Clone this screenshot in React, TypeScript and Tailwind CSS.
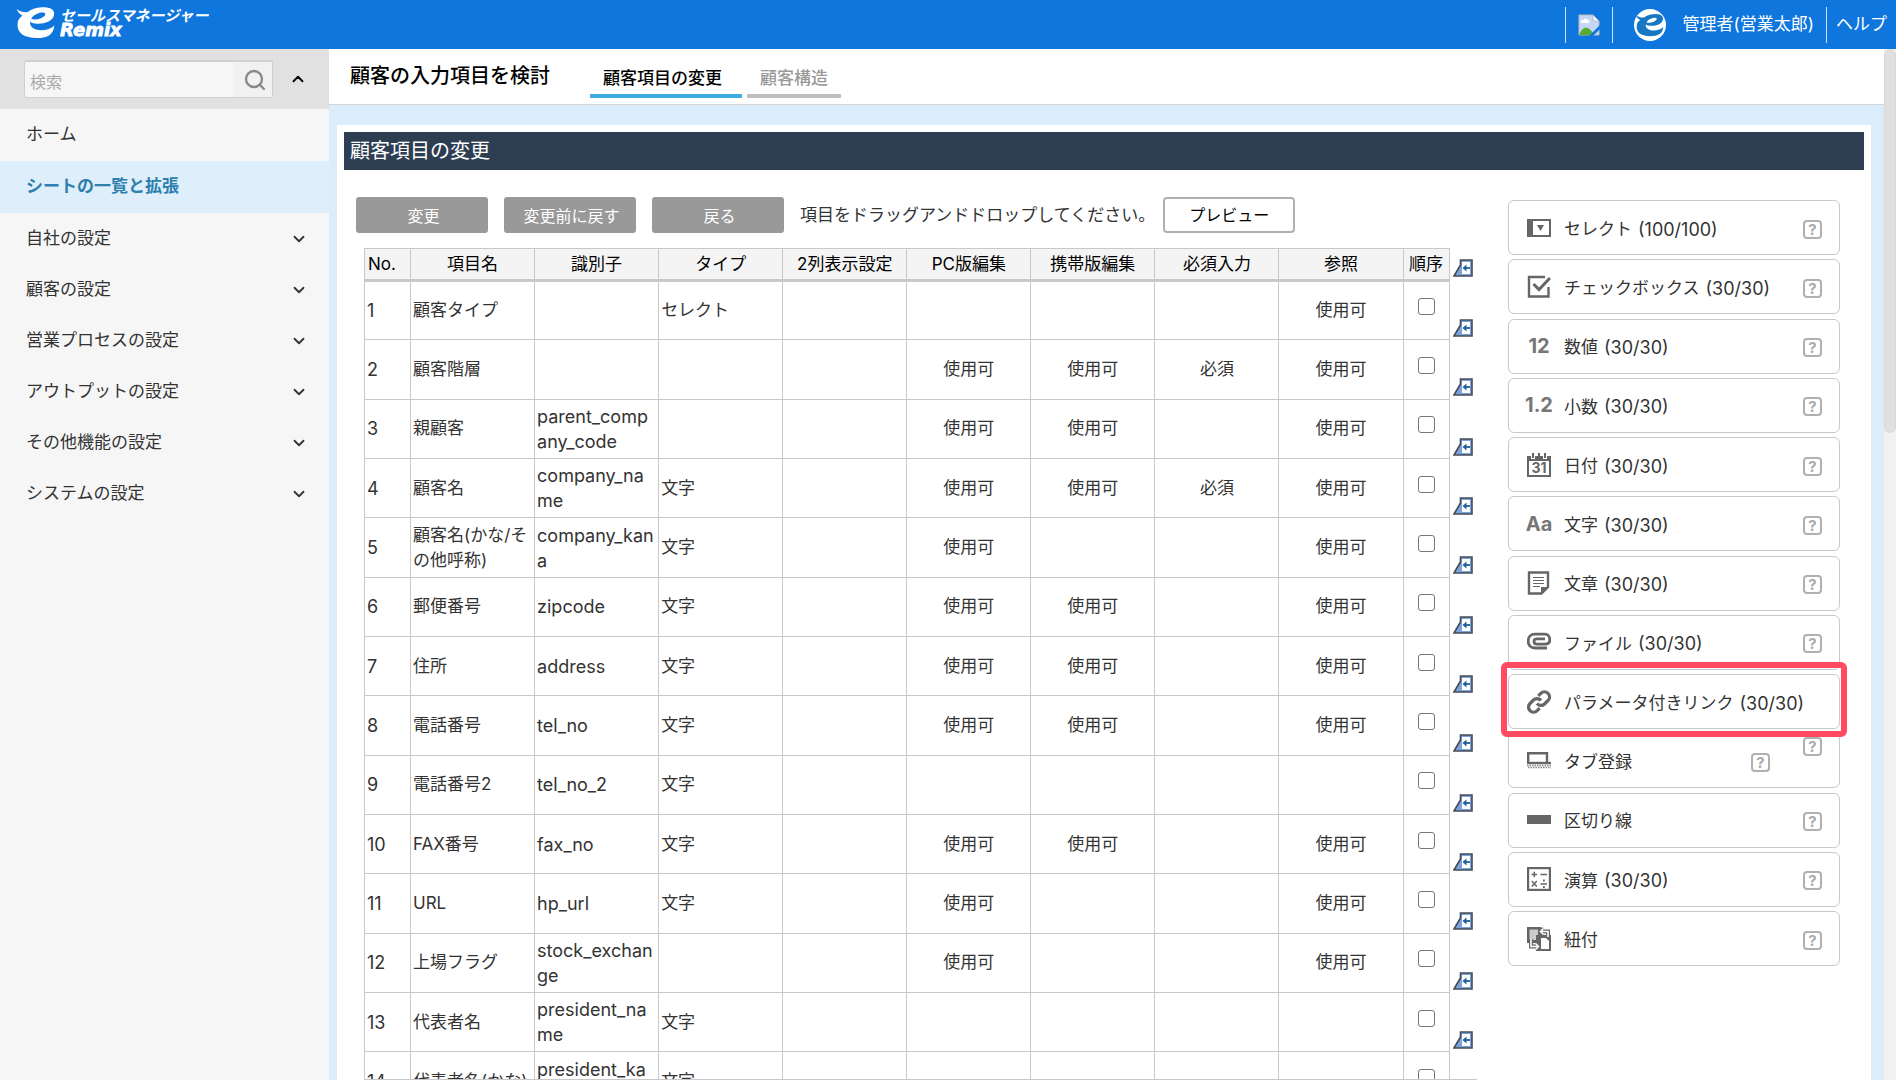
import type { ReactNode } from 'react';
import { ChevronDown, ChevronUp, Search } from 'lucide-react';

const menu = [
  { label: 'ホーム', sub: false },
  { label: 'シートの一覧と拡張', sub: false, active: true },
  { label: '自社の設定', sub: true },
  { label: '顧客の設定', sub: true },
  { label: '営業プロセスの設定', sub: true },
  { label: 'アウトプットの設定', sub: true },
  { label: 'その他機能の設定', sub: true },
  { label: 'システムの設定', sub: true },
];

const OK = '使用可';

type Row = { name: string; id: string[]; type: string; pc: string; mobile: string; required: string; ref: string };

// 識別子は折り返し位置で分けて渡す
const row = (name: string, id: string[] = [], type = '', pc = '', mobile = '', required = '', ref = ''): Row => ({
  name, id, type, pc, mobile, required, ref,
});

const rows: Row[] = [
  row('顧客タイプ', [], 'セレクト', '', '', '', OK),
  row('顧客階層', [], '', OK, OK, '必須', OK),
  row('親顧客', ['parent_comp', 'any_code'], '', OK, OK, '', OK),
  row('顧客名', ['company_na', 'me'], '文字', OK, OK, '必須', OK),
  row('顧客名(かな/その他呼称)', ['company_kan', 'a'], '文字', OK, '', '', OK),
  row('郵便番号', ['zipcode'], '文字', OK, OK, '', OK),
  row('住所', ['address'], '文字', OK, OK, '', OK),
  row('電話番号', ['tel_no'], '文字', OK, OK, '', OK),
  row('電話番号2', ['tel_no_2'], '文字'),
  row('FAX番号', ['fax_no'], '文字', OK, OK, '', OK),
  row('URL', ['hp_url'], '文字', OK, '', '', OK),
  row('上場フラグ', ['stock_exchan', 'ge'], '', OK, '', '', OK),
  row('代表者名', ['president_na', 'me'], '文字'),
  row('代表者名(かな)', ['president_ka', 'na'], '文字'),
];

function Swoosh({ className }: { className: string }) {
  return (
    <svg viewBox="0 0 40 32" className={className} fill="currentColor" aria-hidden="true">
      <path
        fillRule="evenodd"
        d="M0 2 C4 5 9 6 12 5 C17 1 25 0 31 0.500 C38 1 40 6 38 10 C36 15 28 18 19 17 C16 17 15 16 14 15 C13 20 18 24 25 24 C31 24 36 22 39 19 C38 29 31 32 21 32 C8 32 0 27 1 17 C1 14 3 11 6 9 C3 7 1 5 0 2 Z M15 12 C19 14 26 12 29 9 C31 6 28 5 24 6 C20 7 17 9 15 12 Z"
      />
    </svg>
  );
}

function LogoText() {
  return (
    <svg viewBox="0 0 156 32" className="h-8 w-[156px]" fill="currentColor" fontStyle="italic" fontWeight="700" aria-hidden="true">
      <text x="0" y="14" fontSize="15" fontFamily="'Noto Sans CJK JP', sans-serif">セールスマネージャー</text>
      <text x="0" y="29" fontSize="18" fontFamily="'DejaVu Sans', sans-serif" stroke="currentColor" strokeWidth="0.800">Remix</text>
    </svg>
  );
}

function BrokenImage() {
  return (
    <svg viewBox="0 0 22 22" className="size-[22px]" aria-hidden="true">
      <path d="M1 1 H15 L21 7 V21 H1 Z" fill="#c5d7f5" stroke="#b8bcc4" />
      <path d="M3 9 a2 2 0 0 1 2-3 a3 3 0 0 1 5 0 a2 2 0 0 1 1 3 Z" fill="#fff" />
      <path d="M1 21 C5 11 11 11 16 21 Z" fill="#57ab35" />
      <path d="M15 1 V7 H21 Z" fill="#fff" stroke="#b8bcc4" />
      <path d="M22 11 L11 22 H15 L22 15 Z" fill="#0f76de" />
    </svg>
  );
}

function HelpButton({ className = '' }: { className?: string }) {
  return (
    <button
      type="button"
      aria-label="ヘルプ"
      className={`flex size-[19px] shrink-0 items-center justify-center rounded-[4px] border-2 border-[#b0b0b0] bg-white text-[15px] leading-none font-bold text-[#aaa] ${className}`}
    >
      ?
    </button>
  );
}

function InsertIcon() {
  return (
    <svg viewBox="0 0 20 18" className="block h-[18px] w-5" aria-hidden="true">
      <path d="M1 17 L7.500 6 V1 H19 V17 Z" fill="#7ba3dc" stroke="#454b55" strokeWidth="1.600" />
      <rect x="9" y="3" width="8" height="12" fill="#fff" />
      <path d="M17 9 H12" stroke="#1d5f9e" strokeWidth="1.800" />
      <path d="M9.500 9 L13.500 5.500 V12.500 Z" fill="#1d5f9e" />
    </svg>
  );
}

function Glyph({ children }: { children: ReactNode }) {
  return (
    <svg viewBox="0 0 24 24" className="size-6 shrink-0" fill="none" stroke="#666" strokeWidth="2" aria-hidden="true">
      {children}
    </svg>
  );
}

function Letters({ children }: { children: ReactNode }) {
  return (
    <span className="flex w-6 shrink-0 justify-center text-xl leading-6 font-bold text-[#777]">{children}</span>
  );
}

type Part = { label: string; count?: string; icon: ReactNode; help?: 'inner' | 'dropped' };

const parts: Part[] = [
  {
    label: 'セレクト',
    count: '(100/100)',
    icon: (
      <Glyph>
        <path d="M0 3 H24 V21 H0 Z M6 5 V19 H22 V5 Z" fill="#666" fillRule="evenodd" stroke="none" />
        <path d="M10 9 H17 L13.500 15 Z" fill="#666" stroke="none" />
      </Glyph>
    ),
  },
  {
    label: 'チェックボックス',
    count: '(30/30)',
    icon: (
      <Glyph>
        <path d="M18 2 H2 V21.500 H21.500 V12" strokeWidth="2.400" />
        <path d="M6.500 9 L12 14.500 L23 3" strokeWidth="3" />
      </Glyph>
    ),
  },
  { label: '数値', count: '(30/30)', icon: <Letters>12</Letters> },
  { label: '小数', count: '(30/30)', icon: <Letters>1.2</Letters> },
  {
    label: '日付',
    count: '(30/30)',
    icon: (
      <Glyph>
        <path d="M0 3 H4 V6 H8 V3 H16 V6 H20 V3 H24 V24 H0 Z M2 8 V22 H22 V8 Z" fill="#666" fillRule="evenodd" stroke="none" />
        <path d="M6 0 V5 M12 0 V5 M18 0 V5" />
        <text x="12" y="20" textAnchor="middle" fontSize="14" fontWeight="700" fill="#666" stroke="none">31</text>
      </Glyph>
    ),
  },
  { label: '文字', count: '(30/30)', icon: <Letters>Aa</Letters> },
  {
    label: '文章',
    count: '(30/30)',
    icon: (
      <Glyph>
        <path d="M2 1.500 H21 V16 L14.500 22.500 H2 Z" strokeWidth="2.400" />
        <path d="M14 23 V16 H22 Z" fill="#666" stroke="none" />
        <path d="M6 6.500 H17 M6 9.500 H17 M6 12.500 H17 M6 15.500 H13" strokeWidth="1.200" />
      </Glyph>
    ),
  },
  {
    label: 'ファイル',
    count: '(30/30)',
    icon: (
      <Glyph>
        <path
          d="M20 18 H8 C3.500 18 1.200 15 1.200 11 C1.200 7 3.500 4.200 8 4.200 H18 C21 4.200 22.800 7 22.800 10 C22.800 13 21 14.200 18 14.200 H10 C8 14.200 7 13 7 11.500 C7 10 8 8.800 10 8.800 H18"
          strokeWidth="2.800"
        />
      </Glyph>
    ),
  },
  {
    label: 'パラメータ付きリンク',
    count: '(30/30)',
    help: 'dropped',
    icon: (
      <Glyph>
        <path
          d="M10 13.500 a5 5 0 0 0 7.500 .5 l3.500-3.500 a5 5 0 0 0 -7.200-7.200 l-2.500 2.500 M14 10.500 a5 5 0 0 0 -7.500 -.5 l-3.500 3.500 a5 5 0 0 0 7.200 7.200 l2.500-2.500"
          strokeWidth="3.200"
        />
      </Glyph>
    ),
  },
  {
    label: 'タブ登録',
    help: 'inner',
    icon: (
      <Glyph>
        <path d="M1.200 14 V4.200 H20 V13" strokeWidth="2.400" />
        <path d="M0 14 H24" strokeWidth="2.400" />
        <path d="M0 16.500 H24 M1 18.500 H24" strokeWidth="1.500" strokeDasharray="1.500 1" stroke="#888" />
      </Glyph>
    ),
  },
  {
    label: '区切り線',
    icon: (
      <Glyph>
        <path d="M0 11.500 H24" strokeWidth="9" />
      </Glyph>
    ),
  },
  {
    label: '演算',
    count: '(30/30)',
    icon: (
      <Glyph>
        <rect x="1" y="1" width="22" height="22" strokeWidth="2.400" />
        <path d="M4.500 7.500 H10 M7.300 4.800 V10.200 M13.500 7.500 H20 M4.800 14 L9.800 19.500 M9.800 14 L4.800 19.500 M13.500 17 H20" strokeWidth="1.500" />
        <path d="M16 13.500 H17.800 M16 20 H17.800" strokeWidth="1.800" />
      </Glyph>
    ),
  },
  {
    label: '紐付',
    icon: (
      <Glyph>
        <path d="M0 0 H14 V16 H0 Z" fill="#666" stroke="none" />
        <path d="M2.500 2.500 H11 V13 H2.500 Z" fill="#ccc" stroke="none" />
        <path d="M9 8 H24 V24 H9 Z" fill="#666" stroke="none" />
        <path d="M14 11 H19 L22 14 V22 H14 Z" fill="#fff" stroke="none" />
        <path d="M21 10 V4.500 H14 M16.500 1.500 L13.500 4.500 L16.500 7.500" stroke="#666" strokeWidth="4" />
        <path d="M21 10 V4.500 H14 M16.500 1.500 L13.500 4.500 L16.500 7.500" stroke="#fff" strokeWidth="1.600" />
        <path d="M4 12 V19.500 H11 M8.500 16.500 L11.500 19.500 L8.500 22.500" stroke="#666" strokeWidth="4" />
        <path d="M4 12 V19.500 H11 M8.500 16.500 L11.500 19.500 L8.500 22.500" stroke="#fff" strokeWidth="1.600" />
      </Glyph>
    ),
  },
];

function Header() {
  return (
    <header className="flex h-[49px] shrink-0 items-center justify-between bg-[#0f76de] text-white">
      <a href="#" aria-label="eセールスマネージャー Remix" className="flex items-center gap-1 pb-1 pl-4">
        <Swoosh className="h-[31px] w-10" />
        <LogoText />
      </a>
      <div className="flex h-9 items-center text-[17px]">
        <span className="flex h-full items-center border-x border-[#cfe3f8] px-3">
          <BrokenImage />
        </span>
        <a href="#" className="flex h-full items-center gap-[17px] border-r border-[#cfe3f8] pr-3 pl-[21px]">
          <span className="flex size-8 items-center justify-center rounded-full bg-white text-[#1777c4]">
            <Swoosh className="h-6 w-7" />
          </span>
          管理者(営業太郎)
        </a>
        <a href="#" className="px-[9px]">ヘルプ</a>
      </div>
    </header>
  );
}

function Sidebar() {
  return (
    <aside className="w-[329px] shrink-0 bg-[#f6f6f6] text-[17px] text-[#333]">
      <div className="flex h-[60px] items-center bg-[#e1e1e1] pl-6">
        <label className="flex h-[38px] w-[249px] items-center rounded-[3px] border border-t-2 border-[#d0d0d0] bg-[#f6f6f6]">
          <input
            type="text"
            placeholder="検索"
            aria-label="検索"
            className="h-full min-w-0 flex-1 px-[5px] pt-1 text-base outline-none placeholder:text-[#aaa]"
          />
          <span className="flex h-full w-[38px] items-center justify-center bg-[#f1f1f1] pl-1 text-[#888]">
            <Search size={24} strokeWidth={2.3} />
          </span>
        </label>
        <button type="button" aria-label="閉じる" className="ml-4 text-black">
          <ChevronUp size={18} strokeWidth={2.4} />
        </button>
      </div>
      <nav>
        {menu.map((m) => (
          <a
            key={m.label}
            href="#"
            className={`flex items-center justify-between pr-[21px] pl-[26px] ${m.sub ? 'h-[51px]' : 'h-[52px]'} ${
              m.active ? 'bg-[#deeefb] font-bold text-[#2d7fae]' : ''
            }`}
          >
            {m.label}
            {m.sub && <ChevronDown size={18} strokeWidth={2.4} />}
          </a>
        ))}
      </nav>
    </aside>
  );
}

function FieldTable() {
  const th = 'border border-[#c8c8c8] border-b-[3px] bg-[#f4f4f4] p-0 font-normal text-black';
  const td = 'border border-[#c8c8c8] p-0 pl-[2px]';
  const tdCenter = 'border border-[#c8c8c8] p-0 text-center';

  return (
    <div className="min-h-0 flex-1 overflow-hidden border-b border-[#c8c8c8]">
      <table className="h-[864px] w-full table-fixed border-collapse text-[17px] leading-[25px] text-[#333]">
        <colgroup>
          <col className="w-[46px]" />
          <col />
          <col />
          <col />
          <col />
          <col />
          <col />
          <col />
          <col />
          <col className="w-[46px]" />
          <col className="w-[28px]" />
        </colgroup>
        <thead>
          <tr className="h-8">
            <th className={`${th} pl-[3px] text-left`}>No.</th>
            <th className={th}>項目名</th>
            <th className={th}>識別子</th>
            <th className={th}>タイプ</th>
            <th className={th}>2列表示設定</th>
            <th className={th}>PC版編集</th>
            <th className={th}>携帯版編集</th>
            <th className={th}>必須入力</th>
            <th className={th}>参照</th>
            <th className={th}>順序</th>
            <td className="p-0 pb-1 pl-[3px] align-bottom"><InsertIcon /></td>
          </tr>
        </thead>
        <tbody>
          {rows.map((r, i) => (
            <tr key={r.name} className="h-[59px]">
              <td className={`${td} text-lg leading-[25px]`}>{i + 1}</td>
              <td className={`${td} break-all`}>{r.name}</td>
              <td className={`${td} text-lg leading-[25px]`}>
                {r.id.map((part, n) => (
                  <span key={n}>
                    {n > 0 && <wbr />}
                    {part}
                  </span>
                ))}
              </td>
              <td className={td}>{r.type}</td>
              <td className={td} />
              <td className={tdCenter}>{r.pc}</td>
              <td className={tdCenter}>{r.mobile}</td>
              <td className={tdCenter}>{r.required}</td>
              <td className={tdCenter}>{r.ref}</td>
              <td className="border border-[#c8c8c8] p-0 pb-2">
                <input
                  type="checkbox"
                  aria-label={`${r.name} 順序`}
                  className="mx-auto block size-[17px] appearance-none rounded-[3px] border border-[#767676] bg-white"
                />
              </td>
              <td className="p-0 pb-[3px] pl-[3px] align-bottom"><InsertIcon /></td>
            </tr>
          ))}
        </tbody>
      </table>
    </div>
  );
}

function PartsList() {
  return (
    <ul className="flex h-[766px] w-[332px] shrink-0 flex-col justify-between text-[17px] text-[#333]">
      {parts.map((p) => (
        <li
          key={p.label}
          className="relative flex h-[55px] items-center rounded-md border border-[#c8c8c8] bg-white pr-[17px] pl-[18px]"
        >
          {p.icon}
          <span className="ml-[13px] flex flex-1 items-center gap-[6px] pt-1 whitespace-nowrap">
            {p.label}
            {p.count && <span className="text-lg leading-6">{p.count}</span>}
          </span>
          {!p.help && <HelpButton className="mt-[3px]" />}
          {p.help === 'inner' && <HelpButton className="mt-[3px] mr-[52px]" />}
          {p.help === 'dropped' && (
            <>
              <HelpButton className="absolute top-[62px] right-[17px] z-10" />
              <span className="pointer-events-none absolute -inset-x-2 -top-[13px] -bottom-[9px] z-20 rounded-md border-6 border-[#ff4a62]" />
            </>
          )}
        </li>
      ))}
    </ul>
  );
}

export default function App() {
  const grayButton = 'h-9 w-[132px] rounded-[3px] bg-[#999] pt-[2px] pl-[3px] text-base leading-none text-white';

  return (
    <div className="flex h-screen flex-col overflow-hidden bg-white font-[family-name:Inter,'Noto_Sans_CJK_JP',sans-serif]">
      <Header />
      <div className="flex min-h-0 flex-1">
        <Sidebar />
        <main className="flex min-w-0 flex-1 flex-col bg-[#dbedfb]">
          <div className="flex h-14 shrink-0 items-center border-b border-[#d4d4d4] bg-white pl-[21px]">
            <h1 className="w-[240px] pb-[2px] text-xl font-medium text-black">顧客の入力項目を検討</h1>
            <nav className="flex gap-[5px] self-end pb-[6px] text-[17px] font-medium">
              <a href="#" className="border-b-4 border-[#3eaee0] pr-5 pb-[3px] pl-[13px] text-black">顧客項目の変更</a>
              <a href="#" className="border-b-4 border-[#bfbfbf] px-[13px] pb-[3px] text-[#999]">顧客構造</a>
            </nav>
          </div>
          <section className="mt-5 mr-[13px] ml-2 flex min-h-0 flex-1 flex-col bg-white px-[7px] pt-[7px]">
            <h2 className="flex h-[38px] shrink-0 items-center bg-[#2d3e53] pl-[6px] text-xl text-white">顧客項目の変更</h2>
            <div className="flex min-h-0 flex-1 justify-between pr-6">
              <div className="flex min-w-0 flex-1 flex-col pl-3">
                <div className="mt-[27px] mb-[15px] flex shrink-0 items-center gap-4">
                  <button type="button" className={grayButton}>変更</button>
                  <button type="button" className={grayButton}>変更前に戻す</button>
                  <button type="button" className={grayButton}>戻る</button>
                  <span className="-mr-2 pt-[2px] text-[17px] text-[#333]">項目をドラッグアンドドロップしてください。</span>
                  <button type="button" className="h-9 w-[132px] rounded-[4px] border-2 border-[#b0b0b0] bg-white text-base text-black">
                    プレビュー
                  </button>
                </div>
                <div className="flex min-h-0 flex-1 flex-col pl-2">
                  <FieldTable />
                </div>
              </div>
              <div className="shrink-0 pt-[30px] pl-[31px]">
                <PartsList />
              </div>
            </div>
          </section>
        </main>
        <div className="w-3 shrink-0 bg-[#f1f1f1]" aria-hidden="true">
          <div className="h-[384px] rounded-full border-x border-[#d8d8d8] bg-[#e0e0e0]" />
        </div>
      </div>
    </div>
  );
}
